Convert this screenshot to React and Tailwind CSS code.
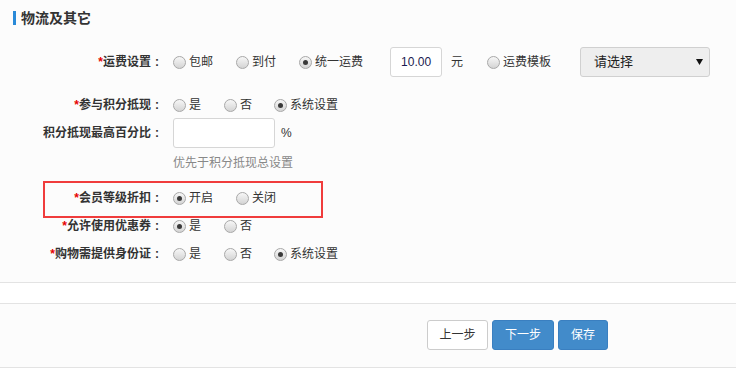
import React from "react";

const font = { fontFamily: '"Liberation Sans", "Noto Sans CJK SC", sans-serif' };

function Radio({ label, checked, className = "" }) {
  return (
    <span className={"flex items-center " + className}>
      <span className="relative flex h-[13px] w-[13px] items-center justify-center rounded-full border border-[#a8a8a8] bg-gradient-to-b from-[#f7f7f7] to-[#d4d4d4]">
        {checked && <span className="h-[5px] w-[5px] rounded-full bg-[#3a3a3a]" />}
      </span>
      <span className="ml-[3px] text-[12px] text-[#333]">{label}</span>
    </span>
  );
}

function Label({ text, req = true }) {
  return (
    <div className="flex w-[163px] shrink-0 items-center justify-end text-[12px] font-bold text-[#333]">
      {req && <span className="text-[#e60000]">*</span>}
      <span>{text}</span>
      <span className="inline-block w-[12px] text-center">:</span>
    </div>
  );
}

export default function App() {
  return (
    <div className="h-[384px] w-[736px] overflow-hidden bg-white" style={font}>
      <div className="bg-[#fcfcfc]">
        <div className="flex h-[36px] items-start pt-[11px]">
          <span className="ml-[13px] h-[14px] w-[3px] bg-[#2a8ad8]" />
          <span className="ml-[5px] text-[14px] font-bold leading-[14px] text-[#333]">物流及其它</span>
        </div>

        <div className="mt-[11px] flex h-[30px] items-center">
          <Label text="运费设置" />
          <div className="ml-[10px] flex items-center">
            <Radio label="包邮" className="mr-[23px]" />
            <Radio label="到付" className="mr-[23px]" />
            <Radio label="统一运费" checked />
            <div className="ml-[27px] flex h-[30px] w-[52px] items-center justify-center rounded-[3px] border border-[#d6d6d6] bg-white text-[12px] text-[#1a1a50]">
              10.00
            </div>
            <span className="ml-[9px] text-[12px] text-[#333]">元</span>
            <Radio label="运费模板" className="ml-[24px]" />
            <div className="ml-[29px] flex h-[30px] w-[130px] items-center justify-between rounded-[3px] border border-[#d0d0d0] bg-[#eeeeee] pl-[13px] pr-[6px] text-[13px] text-[#222]">
              <span>请选择</span>
              <svg width="7" height="6" viewBox="0 0 7 6">
                <path d="M0 0h7L3.5 6z" fill="#111" />
              </svg>
            </div>
          </div>
        </div>

        <div className="mt-[16px] flex h-[24px] items-center">
          <Label text="参与积分抵现" />
          <div className="ml-[10px] flex items-center">
            <Radio label="是" className="mr-[23px]" />
            <Radio label="否" className="mr-[22px]" />
            <Radio label="系统设置" checked />
          </div>
        </div>

        <div className="mt-[1px] flex h-[30px] items-center">
          <Label text="积分抵现最高百分比" req={false} />
          <div className="ml-[10px] h-[30px] w-[102px] rounded-[3px] border border-[#d6d6d6] bg-white" />
          <span className="ml-[6px] text-[12px] text-[#333]">%</span>
        </div>

        <div className="ml-[173px] mt-[6px] h-[18px] text-[12px] leading-[18px] text-[#888]">优先于积分抵现总设置</div>

        <div className="relative mt-[12px] flex h-[28px] items-center">
          <span className="pointer-events-none absolute left-[43px] top-[-3px] h-[37px] w-[280px] border-2 border-[#f03c3c]" />
          <Label text="会员等级折扣" />
          <div className="ml-[10px] flex items-center">
            <Radio label="开启" checked className="mr-[23px]" />
            <Radio label="关闭" />
          </div>
        </div>

        <div className="mt-[2px] flex h-[24px] items-center">
          <Label text="允许使用优惠券" />
          <div className="ml-[10px] flex items-center">
            <Radio label="是" checked className="mr-[23px]" />
            <Radio label="否" />
          </div>
        </div>

        <div className="mt-[4px] flex h-[24px] items-center">
          <Label text="购物需提供身份证" />
          <div className="ml-[10px] flex items-center">
            <Radio label="是" className="mr-[23px]" />
            <Radio label="否" className="mr-[22px]" />
            <Radio label="系统设置" checked />
          </div>
        </div>

        <div className="h-[16px]" />
      </div>

      <div className="h-[21px] border-t border-[#e3e3e3] bg-white" />

      <div className="flex h-[65px] border-y border-[#e3e3e3] bg-[#fcfcfc] pl-[427px] pt-[16px]">
        <button className="h-[30px] w-[61px] rounded-[3px] border border-[#cccccc] bg-white text-[12px] text-[#333]">上一步</button>
        <button className="ml-[4px] h-[30px] w-[62px] rounded-[3px] border border-[#3a7fc0] bg-[#428bca] text-[12px] text-white">下一步</button>
        <button className="ml-[4px] h-[30px] w-[50px] rounded-[3px] border border-[#3a7fc0] bg-[#428bca] text-[12px] text-white">保存</button>
      </div>
    </div>
  );
}
